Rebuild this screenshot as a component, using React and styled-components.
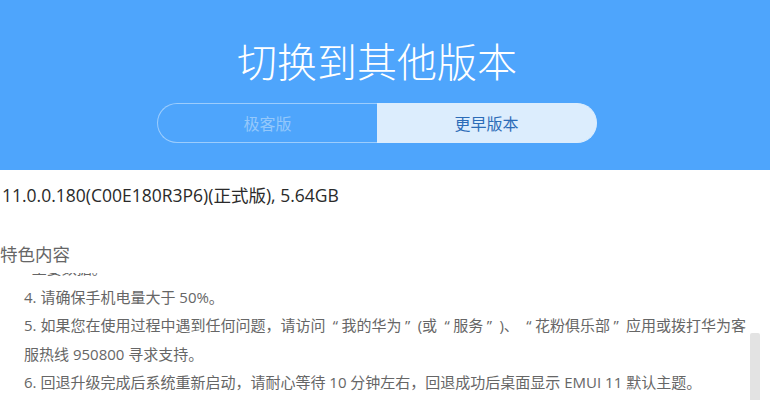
import React from 'react';
import styled, { createGlobalStyle } from 'styled-components';

const GlobalStyle = createGlobalStyle`
  html, body {
    margin: 0;
    padding: 0;
    background: #ffffff;
    overflow: hidden;
  }
  body {
    font-family: "Open Sans", "Noto Sans CJK SC", sans-serif;
  }
`;

const Header = styled.header`
  height: 170px;
  background: #4ea5fc;
  display: flex;
  flex-direction: column;
  align-items: center;
  box-sizing: border-box;
  padding: 36px 16px 0 0;
`;

const Title = styled.h1`
  margin: 0;
  font-family: "Noto Sans CJK SC", sans-serif;
  font-weight: 300;
  font-size: 40px;
  line-height: 48px;
  color: #ffffff;
`;

const Toggle = styled.div`
  margin-top: 19px;
  width: 440px;
  height: 40px;
  display: flex;
`;

const ToggleOption = styled.div`
  flex: 1;
  display: flex;
  align-items: center;
  justify-content: center;
  box-sizing: border-box;
  font-family: "Noto Sans CJK SC", sans-serif;
  font-size: 16px;
  border-radius: ${p => (p.side === 'left' ? '20px 0 0 20px' : '0 20px 20px 0')};
  border: 1.5px solid ${p => (p.active ? '#dcedfd' : '#9ccdfd')};
  ${p => (p.side === 'left' ? 'border-right: none;' : 'border-left: none;')}
  background: ${p => (p.active ? '#dcedfd' : 'transparent')};
  color: ${p => (p.active ? '#2c6cb8' : '#94c8fb')};
`;

const Content = styled.main`
  padding: 0 0 0 2px;
`;

const VersionLine = styled.div`
  margin-top: 13px;
  font-size: 17.5px;
  line-height: 24px;
  color: #2a2a2a;
  font-family: "Open Sans", "Noto Sans CJK SC", sans-serif;
`;

const SectionTitle = styled.div`
  margin-top: 35px;
  margin-left: -2px;
  font-family: "Noto Sans CJK SC", sans-serif;
  font-size: 17.5px;
  line-height: 24px;
  color: #666666;
`;

const Viewport = styled.div`
  position: relative;
  margin-top: 7px;
  height: 140px;
  overflow: hidden;
`;

const List = styled.div`
  margin-top: -19px;
  padding-left: 22px;
  font-family: "Open Sans", "Noto Sans CJK SC", sans-serif;
  font-size: 15px;
  line-height: 28.5px;
  color: #666666;
  white-space: nowrap;
`;

const Line = styled.div``;

const Quote = styled.span`
  margin: 0 3.5px;
`;

const ScrollThumb = styled.div`
  position: absolute;
  left: 748px;
  top: 60px;
  width: 10px;
  height: 120px;
  background: #e3e3e3;
  border-radius: 2px;
`;

export default function App() {
  return (
    <>
      <GlobalStyle />
      <Header>
        <Title>切换到其他版本</Title>
        <Toggle>
          <ToggleOption side="left">极客版</ToggleOption>
          <ToggleOption side="right" active>更早版本</ToggleOption>
        </Toggle>
      </Header>
      <Content>
        <VersionLine>11.0.0.180(C00E180R3P6)(正式版), 5.64GB</VersionLine>
        <SectionTitle>特色内容</SectionTitle>
        <Viewport>
          <List>
            <Line>&nbsp;&nbsp;重要数据。</Line>
            <Line>4. 请确保手机电量大于 50%。</Line>
            <Line>
              5. 如果您在使用过程中遇到任何问题，请访问 <Quote>“</Quote>我的华为<Quote>”</Quote> (或 <Quote>“</Quote>服务<Quote>”</Quote> )、 <Quote>“</Quote>花粉俱乐部<Quote>”</Quote> 应用或拨打华为客
            </Line>
            <Line>服热线 950800 寻求支持。</Line>
            <Line>6. 回退升级完成后系统重新启动，请耐心等待 10 分钟左右，回退成功后桌面显示 EMUI 11 默认主题。</Line>
          </List>
          <ScrollThumb />
        </Viewport>
      </Content>
    </>
  );
}
